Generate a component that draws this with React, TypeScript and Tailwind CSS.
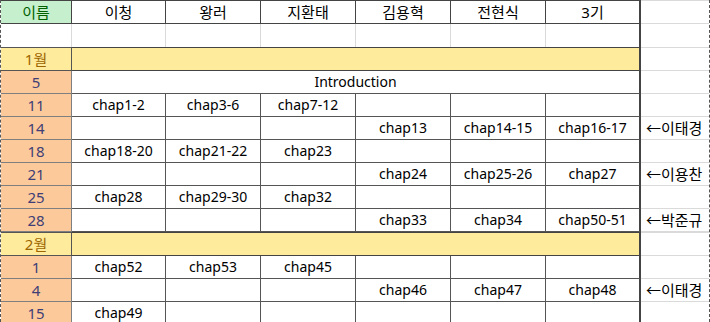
import React from "react";

type Row =
  | { kind: "month"; label: string }
  | { kind: "intro"; day: string }
  | { kind: "day"; day: string; cells: string[]; note?: string };

const names = ["이청", "왕러", "지환태", "김용혁", "전현식", "3기"];

const rows: Row[] = [
  { kind: "month", label: "1월" },
  { kind: "intro", day: "5" },
  { kind: "day", day: "11", cells: ["chap1-2", "chap3-6", "chap7-12", "", "", ""] },
  { kind: "day", day: "14", cells: ["", "", "", "chap13", "chap14-15", "chap16-17"], note: "←이태경" },
  { kind: "day", day: "18", cells: ["chap18-20", "chap21-22", "chap23", "", "", ""] },
  { kind: "day", day: "21", cells: ["", "", "", "chap24", "chap25-26", "chap27"], note: "←이용찬" },
  { kind: "day", day: "25", cells: ["chap28", "chap29-30", "chap32", "", "", ""] },
  { kind: "day", day: "28", cells: ["", "", "", "chap33", "chap34", "chap50-51"], note: "←박준규" },
  { kind: "month", label: "2월" },
  { kind: "day", day: "1", cells: ["chap52", "chap53", "chap45", "", "", ""] },
  { kind: "day", day: "4", cells: ["", "", "", "chap46", "chap47", "chap48"], note: "←이태경" },
  { kind: "day", day: "15", cells: ["chap49", "", "", "", "", ""] },
];

const cell = "h-[23px] flex items-center justify-center border-b border-r border-[#555]";
const dayCell = "h-[23px] flex items-center justify-center border-b border-r border-[#7f7f7f] bg-[#fcc99b] text-[#3f3f76] text-[15px]";
const extra = "h-[23px] flex items-center pl-[5px] border-b border-[#dadada] text-[15px]";

export default function App() {
  return (
    <div className="w-[710px] h-[322px] overflow-hidden bg-white border-l border-r border-dashed border-[#555] font-['Noto_Sans','Noto_Sans_CJK_KR',sans-serif] text-[14px] leading-none text-black">
      <div className="grid grid-cols-[71px_94px_95px_95px_95px_95px_95px_68px]">
        {/* header */}
        <div className="h-[24px] flex items-center justify-center border-t border-b border-r border-[#444] bg-[#c6efce] text-[#006100] text-[15px]">
          이름
        </div>
        {names.map((n, i) => (
          <div
            key={n}
            className={`h-[24px] flex items-center justify-center border-t border-b border-[#444] text-[15px] ${
              i === 5 ? "border-r-2" : "border-r"
            }`}
          >
            {n}
          </div>
        ))}
        <div className="h-[24px] border-t border-b border-[#dadada]" />

        {/* blank row */}
        {Array.from({ length: 7 }).map((_, i) => (
          <div key={i} className={`h-[23px] border-r border-[#dadada] ${i === 6 ? "border-r-2 border-r-[#444]" : ""}`} />
        ))}
        <div className="h-[23px]" />

        {rows.map((r, ri) => {
          if (r.kind === "month") {
            return (
              <React.Fragment key={ri}>
                <div className="h-[24px] flex items-center justify-center border-t border-b border-r border-[#555] bg-[#ffeb9c] text-[#9c6500] text-[15px]">
                  {r.label}
                </div>
                <div className="col-span-6 h-[24px] border-t border-b border-r-2 border-[#444] bg-[#ffeb9c]" />
                <div className={`${extra} h-[24px] border-t`} />
              </React.Fragment>
            );
          }
          if (r.kind === "intro") {
            return (
              <React.Fragment key={ri}>
                <div className={dayCell}>{r.day}</div>
                <div className={`${cell} col-span-6 border-r-2 border-r-[#444]`}>Introduction</div>
                <div className={extra} />
              </React.Fragment>
            );
          }
          return (
            <React.Fragment key={ri}>
              <div className={dayCell}>{r.day}</div>
              {r.cells.map((c, ci) => (
                <div key={ci} className={`${cell} ${ci === 5 ? "border-r-2 border-r-[#444]" : ""}`}>
                  {c}
                </div>
              ))}
              <div className={extra}>{r.note}</div>
            </React.Fragment>
          );
        })}
      </div>
    </div>
  );
}
